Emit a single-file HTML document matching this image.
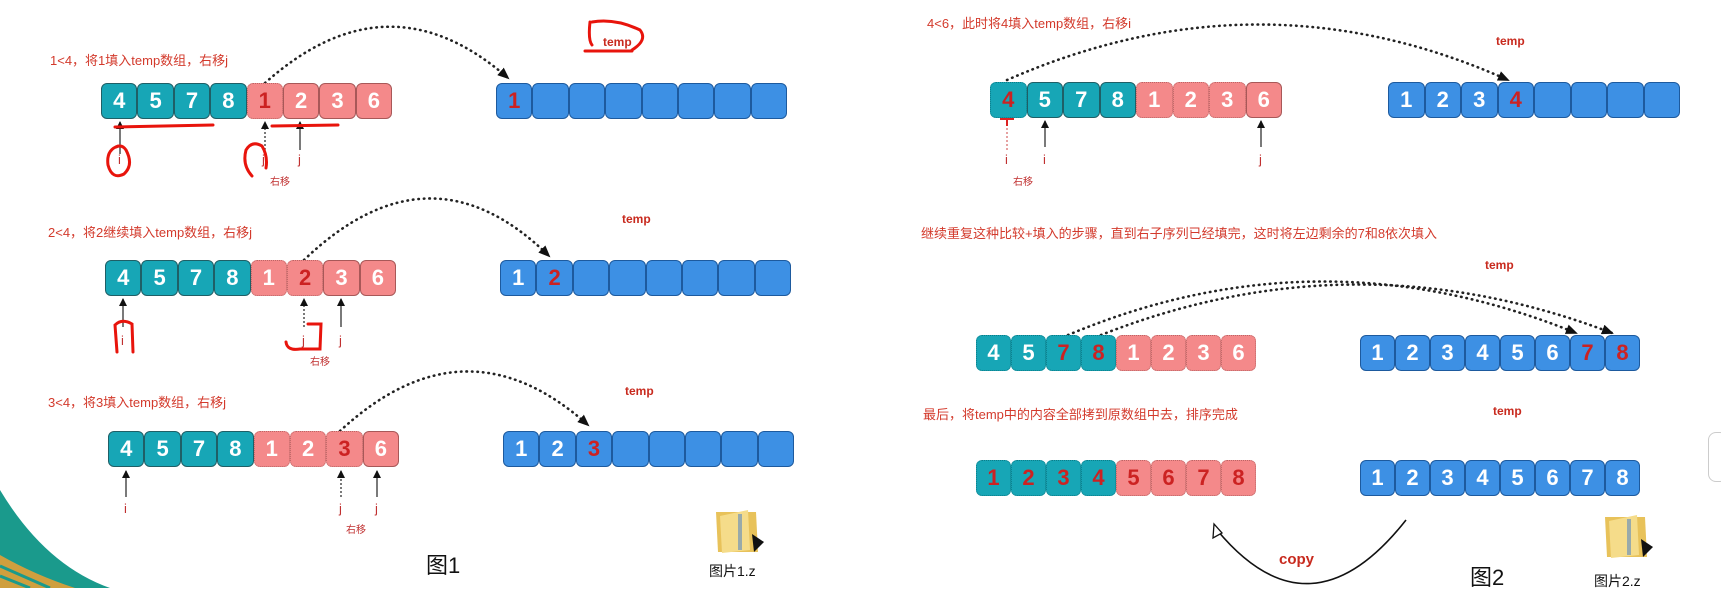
<!DOCTYPE html>
<html><head><meta charset="utf-8"><style>
*{margin:0;padding:0;box-sizing:border-box}
body{width:1721px;height:588px;background:#fff;position:relative;overflow:hidden;font-family:"Liberation Sans","Noto Sans CJK SC",sans-serif}
.row{position:absolute;display:flex;height:36px}
.row div{flex:1;height:36px;border:1px solid #1f5f66;border-radius:6px;color:#fff;font-weight:bold;font-size:22px;line-height:34px;text-align:center}
.t{background:#17a6b6}
.p{background:#f4898a;border-color:#a85858!important}
.b{background:#3d90e4;border-color:#1d5a9e!important}
.d{border-style:dotted!important;border-width:1.5px!important;border-color:#b66!important}
.t.d{border-color:#0c7c88!important}
.r{color:#cc2222!important}
.lbl{position:absolute;color:#d33a2c;font-size:13px;white-space:nowrap}
.sm{position:absolute;color:#c03030;font-size:10px}
.tmp{position:absolute;color:#c82a1e;font-size:12px;font-weight:bold}
.ij{position:absolute;color:#c03030;font-size:13px}
.big{position:absolute;color:#111;font-size:22px}
</style></head><body>
<svg width="1721" height="588" style="position:absolute;left:0;top:0">
<defs>
<marker id="a" markerUnits="userSpaceOnUse" markerWidth="12" markerHeight="10" refX="10" refY="5" orient="auto"><path d="M0,0 L12,5 L0,10 z" fill="#111"/></marker>
<marker id="s" markerUnits="userSpaceOnUse" markerWidth="8" markerHeight="8" refX="7" refY="4" orient="auto"><path d="M0,0 L8,4 L0,8 z" fill="#111"/></marker>
</defs>
<path d="M0 490 Q45 565 110 588 L0 588 Z" fill="#1a9a8c"/>
<path d="M0 555 Q35 575 75 588 L0 588Z" fill="#f0a030" opacity=".85"/>
<path d="M0 566 L50 588 M0 576 L30 588" stroke="#1a9a8c" stroke-width="3"/>
<g fill="none" stroke="#222" stroke-width="2.6" stroke-dasharray="0.5 5" stroke-linecap="round">
<path d="M265 83 Q388 -27 508 78" marker-end="url(#a)"/>
<path d="M304 260 Q430 139 549 256" marker-end="url(#a)"/>
<path d="M340 431 Q465 315 588 425" marker-end="url(#a)"/>
<path d="M1007 80 Q1260 -31 1508 80" marker-end="url(#a)"/>
<path d="M1068 335 Q1320 229 1576 333" marker-end="url(#a)"/>
<path d="M1101 335 Q1355 235 1612 333" marker-end="url(#a)"/>
</g>
<g stroke="#333" stroke-width="1.3" marker-end="url(#s)">
<path d="M120 154 L120 122"/><path d="M300 150 L300 122"/>
<path d="M123 327 L123 299"/><path d="M341 327 L341 299"/>
<path d="M126 497 L126 471"/><path d="M377 497 L377 471"/>
<path d="M1045 147 L1045 121"/><path d="M1261 147 L1261 121"/>
</g>
<g stroke="#333" stroke-width="1.3" stroke-dasharray="2 2" marker-end="url(#s)">
<path d="M265 154 L265 122"/><path d="M304 327 L304 299"/><path d="M341 497 L341 471"/>
</g>
<path d="M1007 150 L1007 122" stroke="#c44" stroke-width="1" stroke-dasharray="2 2"/>
<path d="M1000 119 L1014 119 M1007 112 L1007 126" stroke="#d22" stroke-width="2"/>
<g fill="none" stroke="#e8140c" stroke-width="3" stroke-linecap="round">
<path d="M115 127 L213 125"/><path d="M272 126 L338 125"/>
<path d="M118 146 Q106 150 108 165 Q112 180 124 174 Q134 165 126 150 Q122 144 116 147"/>
<path d="M252 176 Q242 165 246 150 Q252 140 262 146 Q268 156 266 168"/>
<path d="M590 22 Q588 40 592 45 M592 22 Q615 18 640 30 Q648 40 632 50 M585 51 L632 51"/>
<path d="M117 352 L115 325 Q122 318 132 324 L133 352"/>
<path d="M286 342 Q287 351 300 349 L320 349 L321 324 L308 324"/>
</g>
<path d="M1406 520 Q1310 642 1217 530" fill="none" stroke="#111" stroke-width="1.6"/>
<path d="M1214 524 L1213 538 L1222 533 Z" fill="#fff" stroke="#111" stroke-width="1.3"/>
<g><path d="M716 512 L756 512 L758 552 L718 552 Z" fill="#e8c25a"/><path d="M720 516 L748 510 L750 550 L722 553Z" fill="#f5dc8a"/><rect x="738" y="514" width="4" height="36" fill="#9aa"/><path d="M752 534 L764 542 L754 552Z" fill="#111"/></g>
<g><path d="M1605 517 L1645 517 L1647 557 L1607 557 Z" fill="#e8c25a"/><path d="M1609 521 L1637 515 L1639 555 L1611 558Z" fill="#f5dc8a"/><rect x="1627" y="519" width="4" height="36" fill="#9aa"/><path d="M1641 539 L1653 547 L1643 557Z" fill="#111"/></g>
</svg>
<div style="position:absolute;left:1708px;top:432px;width:20px;height:50px;border:1px solid #ccc;border-radius:8px;background:#fff"></div>

<div class="lbl" style="left:50px;top:50px">1&lt;4，将1填入temp数组，右移j</div>
<div class="lbl" style="left:48px;top:222px">2&lt;4，将2继续填入temp数组，右移j</div>
<div class="lbl" style="left:48px;top:392px">3&lt;4，将3填入temp数组，右移j</div>
<div class="lbl" style="left:927px;top:13px">4&lt;6，此时将4填入temp数组，右移i</div>
<div class="lbl" style="left:921px;top:223px">继续重复这种比较+填入的步骤，直到右子序列已经填完，这时将左边剩余的7和8依次填入</div>
<div class="lbl" style="left:923px;top:404px">最后，将temp中的内容全部拷到原数组中去，排序完成</div>
<div class="tmp" style="left:603px;top:35px">temp</div>
<div class="tmp" style="left:622px;top:212px">temp</div>
<div class="tmp" style="left:625px;top:384px">temp</div>
<div class="tmp" style="left:1496px;top:34px">temp</div>
<div class="tmp" style="left:1485px;top:258px">temp</div>
<div class="tmp" style="left:1493px;top:404px">temp</div>

<div class="row" style="left:101px;top:83px;width:291px"><div class="t">4</div><div class="t">5</div><div class="t">7</div><div class="t">8</div><div class="p d r">1</div><div class="p">2</div><div class="p">3</div><div class="p">6</div></div>
<div class="row" style="left:496px;top:83px;width:291px"><div class="b r">1</div><div class="b"></div><div class="b"></div><div class="b"></div><div class="b"></div><div class="b"></div><div class="b"></div><div class="b"></div></div>
<div class="row" style="left:105px;top:260px;width:291px"><div class="t">4</div><div class="t">5</div><div class="t">7</div><div class="t">8</div><div class="p d">1</div><div class="p d r">2</div><div class="p">3</div><div class="p">6</div></div>
<div class="row" style="left:500px;top:260px;width:291px"><div class="b">1</div><div class="b r">2</div><div class="b"></div><div class="b"></div><div class="b"></div><div class="b"></div><div class="b"></div><div class="b"></div></div>
<div class="row" style="left:108px;top:431px;width:291px"><div class="t">4</div><div class="t">5</div><div class="t">7</div><div class="t">8</div><div class="p d">1</div><div class="p d">2</div><div class="p d r">3</div><div class="p">6</div></div>
<div class="row" style="left:503px;top:431px;width:291px"><div class="b">1</div><div class="b">2</div><div class="b r">3</div><div class="b"></div><div class="b"></div><div class="b"></div><div class="b"></div><div class="b"></div></div>
<div class="row" style="left:990px;top:82px;width:292px"><div class="t d r">4</div><div class="t">5</div><div class="t">7</div><div class="t">8</div><div class="p d">1</div><div class="p d">2</div><div class="p d">3</div><div class="p">6</div></div>
<div class="row" style="left:1388px;top:82px;width:292px"><div class="b">1</div><div class="b">2</div><div class="b">3</div><div class="b r">4</div><div class="b"></div><div class="b"></div><div class="b"></div><div class="b"></div></div>
<div class="row" style="left:976px;top:335px;width:280px"><div class="t d">4</div><div class="t d">5</div><div class="t d r">7</div><div class="t d r">8</div><div class="p d">1</div><div class="p d">2</div><div class="p d">3</div><div class="p d">6</div></div>
<div class="row" style="left:1360px;top:335px;width:280px"><div class="b">1</div><div class="b">2</div><div class="b">3</div><div class="b">4</div><div class="b">5</div><div class="b">6</div><div class="b r">7</div><div class="b r">8</div></div>
<div class="row" style="left:976px;top:460px;width:280px"><div class="t d r">1</div><div class="t d r">2</div><div class="t d r">3</div><div class="t d r">4</div><div class="p d r">5</div><div class="p d r">6</div><div class="p d r">7</div><div class="p d r">8</div></div>
<div class="row" style="left:1360px;top:460px;width:280px"><div class="b">1</div><div class="b">2</div><div class="b">3</div><div class="b">4</div><div class="b">5</div><div class="b">6</div><div class="b">7</div><div class="b">8</div></div>

<div class="ij" style="left:118px;top:152px">i</div><div class="ij" style="left:262px;top:152px">j</div><div class="ij" style="left:298px;top:152px">j</div><div class="sm" style="left:270px;top:173px">右移</div>
<div class="ij" style="left:121px;top:333px">i</div><div class="ij" style="left:302px;top:333px">j</div><div class="ij" style="left:339px;top:333px">j</div><div class="sm" style="left:310px;top:353px">右移</div>
<div class="ij" style="left:124px;top:501px">i</div><div class="ij" style="left:339px;top:501px">j</div><div class="ij" style="left:375px;top:501px">j</div><div class="sm" style="left:346px;top:521px">右移</div>
<div class="ij" style="left:1005px;top:152px">i</div><div class="ij" style="left:1043px;top:152px">i</div><div class="ij" style="left:1259px;top:152px">j</div><div class="sm" style="left:1013px;top:173px">右移</div>

<div class="big" style="left:426px;top:548px">图1</div>
<div class="big" style="left:1470px;top:560px">图2</div>
<div style="position:absolute;left:709px;top:561px;font-size:14px;color:#111">图片1.z</div>
<div style="position:absolute;left:1594px;top:571px;font-size:14px;color:#111">图片2.z</div>
<div style="position:absolute;left:1279px;top:551px;font-size:15px;font-weight:bold;color:#c82a1e">copy</div>
</body></html>
